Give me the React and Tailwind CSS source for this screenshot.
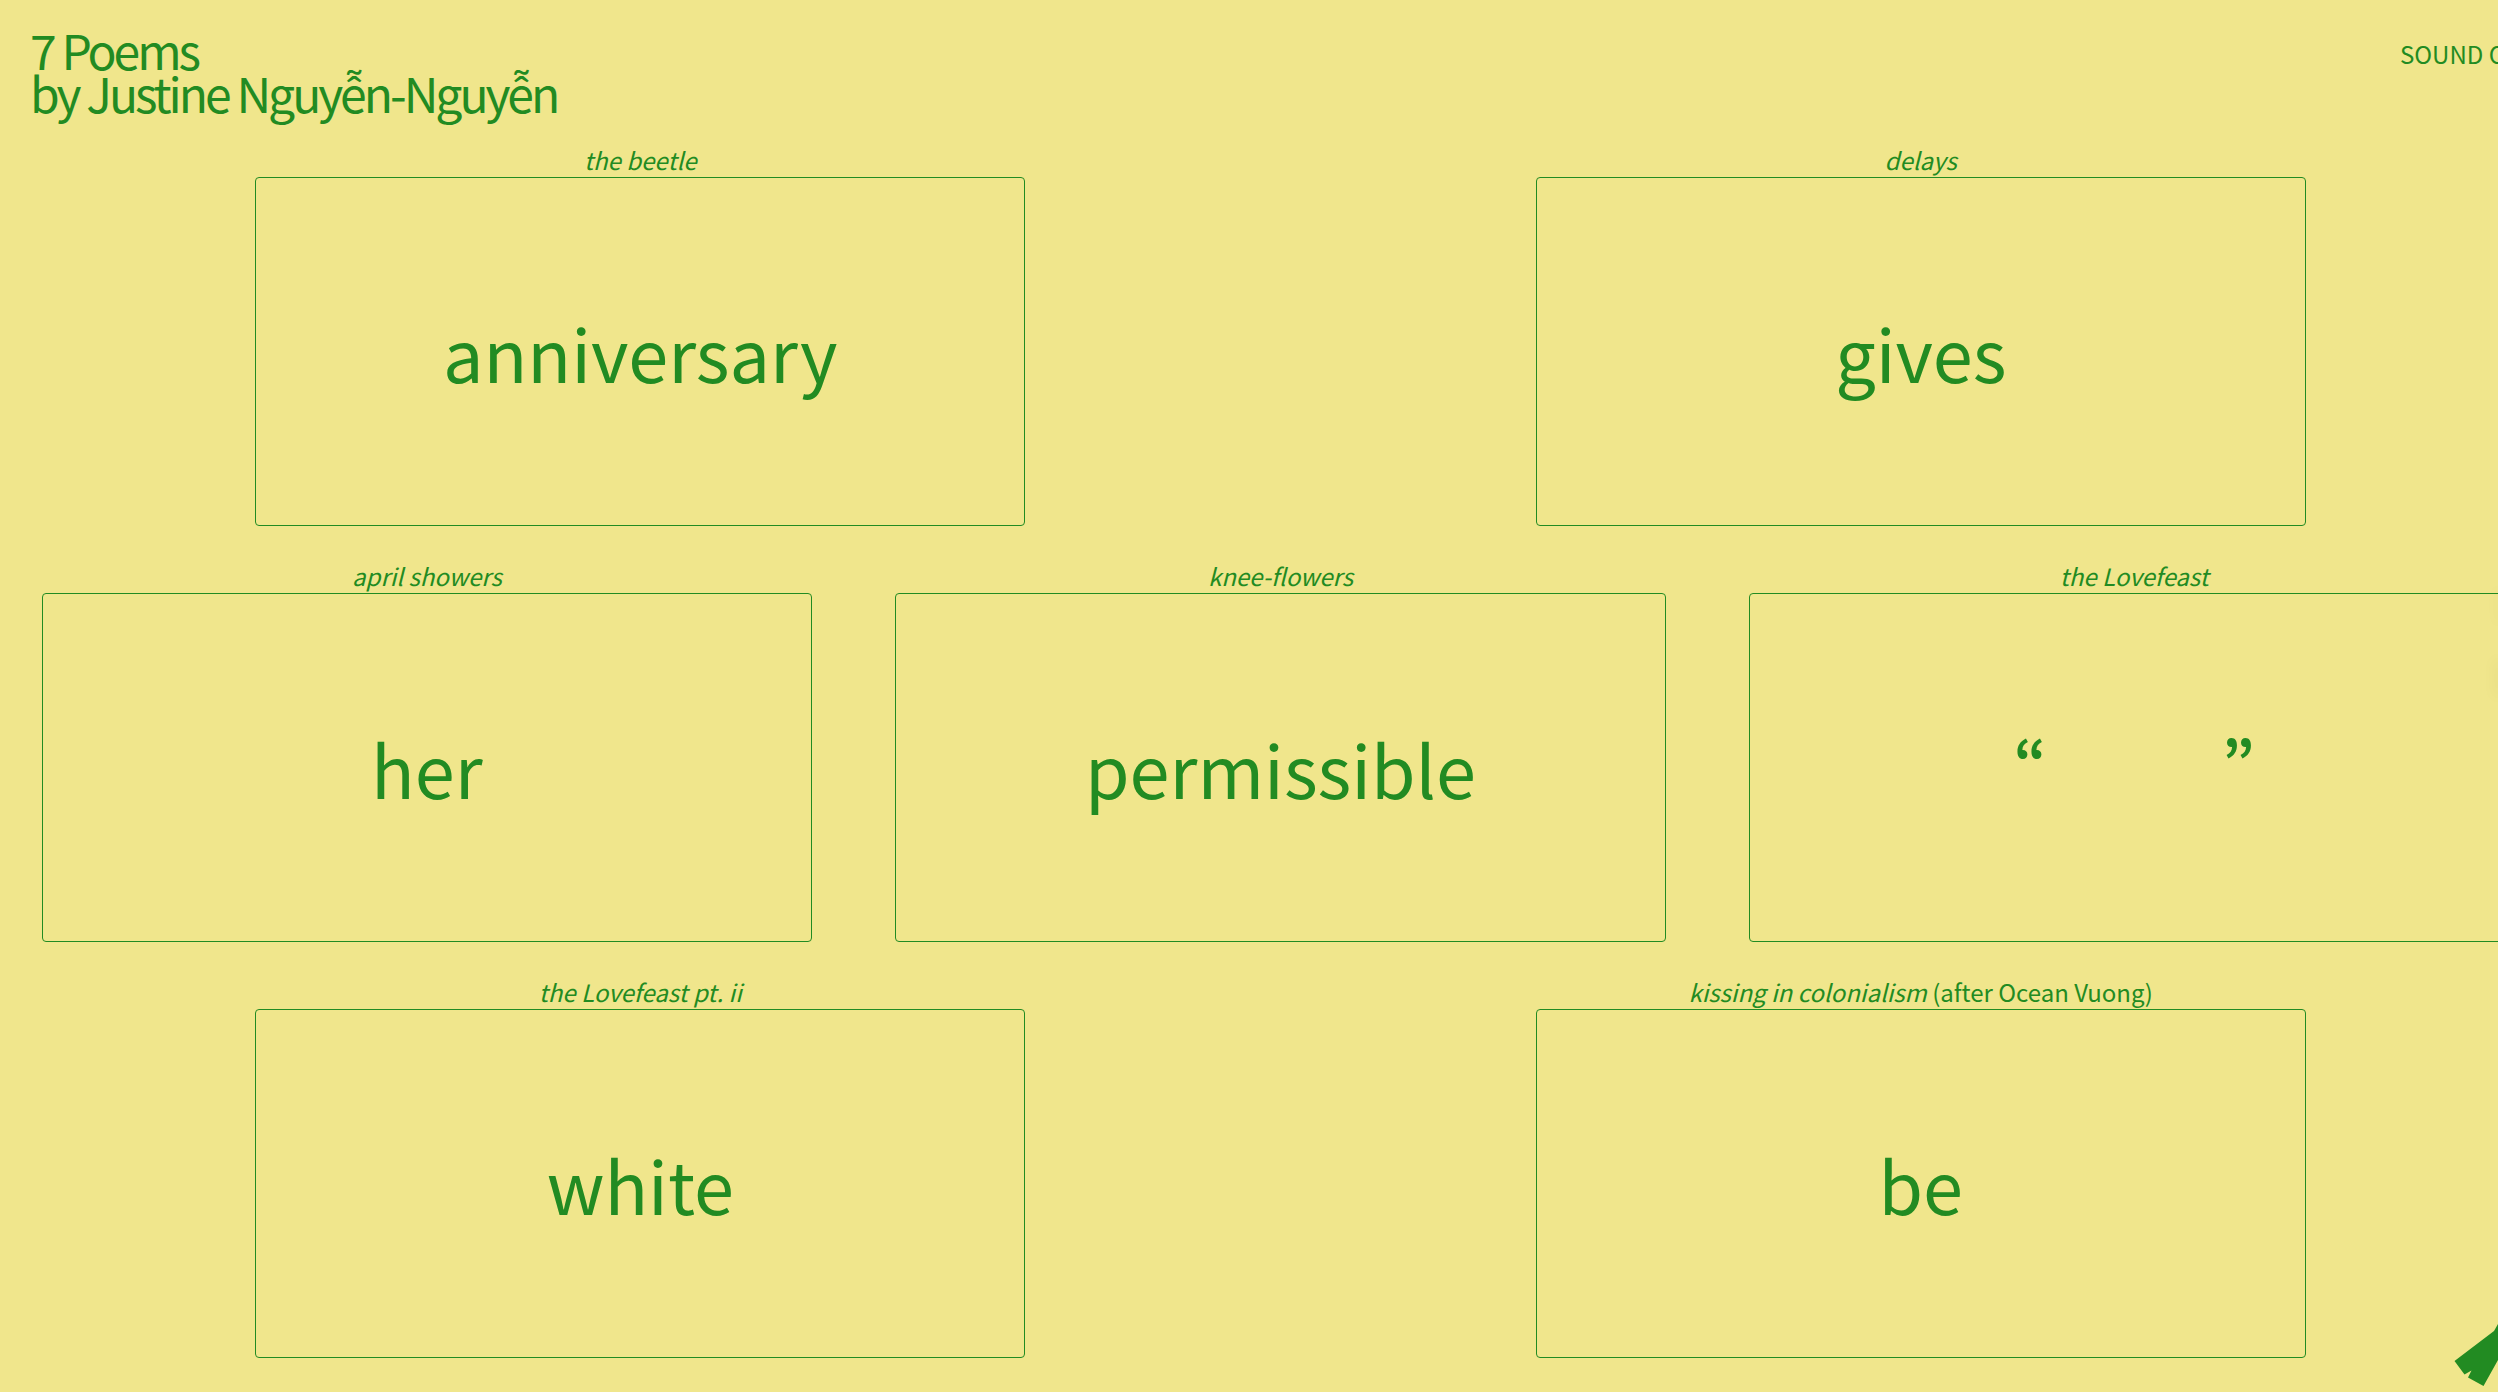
const rows = [
  [
    { title: "the beetle", word: "anniversary" },
    { title: "delays", word: "gives" },
  ],
  [
    { title: "april showers", word: "her" },
    { title: "knee-flowers", word: "permissible" },
    { title: "the Lovefeast", quoted: true },
  ],
  [
    { title: "the Lovefeast pt. ii", word: "white" },
    { title: "kissing in colonialism", note: "(after Ocean Vuong)", word: "be" },
  ],
];

function Poem({ title, note, word, quoted }) {
  return (
    <figure className="box-content flex w-[30%] flex-col px-px">
      <figcaption className="h-[34px] text-center text-2xl leading-[34px]">
        <em>{title}</em>
        {note && ` ${note}`}
      </figcaption>
      <button
        type="button"
        className="-mx-px flex h-[calc(25vh+1px)] items-center justify-center rounded border border-[#228b22] text-[72px] leading-none"
      >
        {quoted ? (
          <span className="flex gap-44 pb-5 text-[56px] font-bold">
            <span>“</span>
            <span>”</span>
          </span>
        ) : (
          word
        )}
      </button>
    </figure>
  );
}

function Ribbon() {
  return (
    <svg className="fixed right-0 bottom-0 h-[70px] w-[44px]" viewBox="0 0 44 70" aria-hidden="true">
      <path fill="#228b22" d="M0.500 39 40 9l4-7v36L29.500 64 14 55.500l3.500-7-7 4Z" />
    </svg>
  );
}

function EdgeGlow() {
  return (
    <div className="fixed top-[590px] right-0 flex flex-col gap-10" aria-hidden="true">
      <div className="h-8 w-0 shadow-[0_0_12px_2px_rgba(0,0,0,0.04)]" />
      <div className="h-8 w-0 shadow-[0_0_14px_3px_rgba(0,0,0,0.05)]" />
    </div>
  );
}

export default function App() {
  return (
    <div className="relative min-h-screen overflow-hidden bg-[#f0e68c] font-['Noto_Sans_CJK_JP',sans-serif] text-[#228b22]">
      <div className="w-[calc(100%+63px)]">
        <header className="flex h-[143px] items-start justify-between px-[30px] pt-7">
          <h1 className="text-5xl leading-[43px] tracking-[-3px]">
            7 Poems
            <br />
            by Justine Nguyễn-Nguyễn
          </h1>
          <a href="#sound" className="w-[131px] pt-2 text-2xl leading-[36px] whitespace-nowrap">
            SOUND ON
          </a>
        </header>
        <main className="flex flex-col gap-[33px]">
          {rows.map((row, i) => (
            <section key={i} className="flex justify-around">
              {row.map((poem) => (
                <Poem key={poem.title} {...poem} />
              ))}
            </section>
          ))}
        </main>
      </div>
      <EdgeGlow />
      <Ribbon />
    </div>
  );
}
